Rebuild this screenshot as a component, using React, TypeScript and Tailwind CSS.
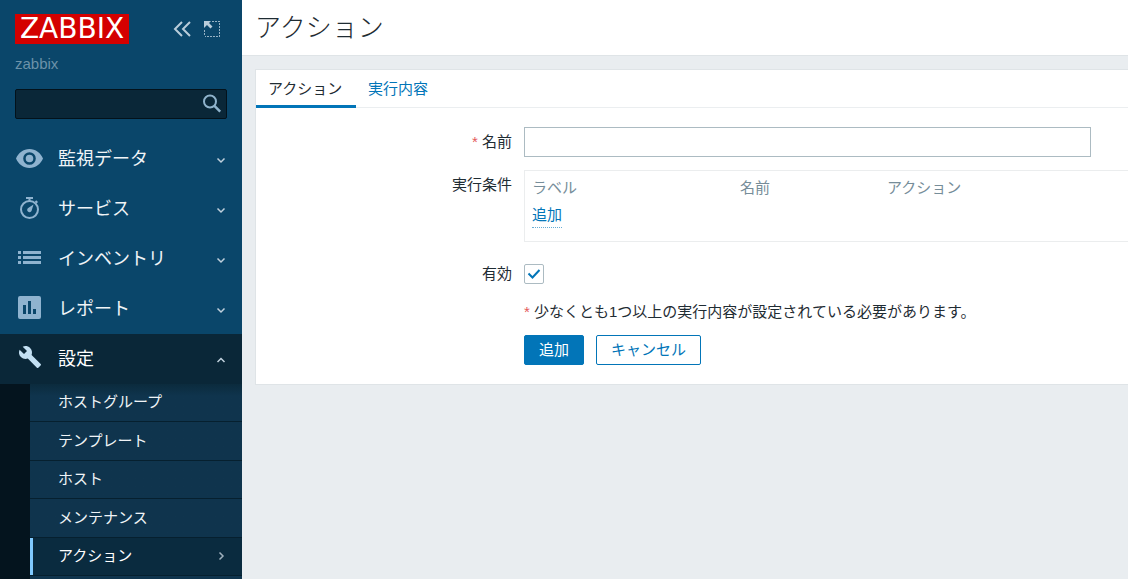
import { useState } from 'react';
import type { ReactNode } from 'react';
import clsx from 'clsx';

interface MenuItem {
  id: string;
  label: string;
  icon: ReactNode;
}

const MENU: MenuItem[] = [
  { id: 'monitoring', label: '監視データ', icon: <EyeIcon /> },
  { id: 'services', label: 'サービス', icon: <StopwatchIcon /> },
  { id: 'inventory', label: 'インベントリ', icon: <ListIcon /> },
  { id: 'reports', label: 'レポート', icon: <ReportIcon /> },
  { id: 'configuration', label: '設定', icon: <WrenchIcon /> },
];

const SUBMENU = ['ホストグループ', 'テンプレート', 'ホスト', 'メンテナンス', 'アクション'];

function EyeIcon() {
  return (
    <svg width="28" height="28" viewBox="0 0 28 28" fill="currentColor" fillRule="evenodd">
      <path d="M14.5 4C8.3 4 3.3 7.9 1 13.5 3.3 19.1 8.3 23 14.5 23S25.7 19.1 28 13.5C25.7 7.9 20.7 4 14.5 4zM14.5 19.8a6.3 6.3 0 1 1 0-12.6 6.3 6.3 0 0 1 0 12.6zM14.5 9.7a3.8 3.8 0 1 0 0 7.600 3.8 3.8 0 0 0 0-7.6z" />
    </svg>
  );
}

function StopwatchIcon() {
  return (
    <svg width="28" height="28" viewBox="0 0 28 28" fill="none" stroke="currentColor">
      <circle cx="14.5" cy="14.5" r="8.5" strokeWidth="2" />
      <path d="M11 3h7M14.5 3v3" strokeWidth="2" />
      <path d="M20.5 6l1.8 1.8" strokeWidth="2" />
      <path d="M18.5 9.5l-2 6.5a2.3 2.3 0 1 1-3.3-3z" fill="currentColor" stroke="none" />
    </svg>
  );
}

function ListIcon() {
  return (
    <svg width="28" height="28" viewBox="0 0 28 28" fill="currentColor">
      <path d="M3 6h3v3H3zM8 6h18v3H8zM3 11h3v3H3zM8 11h18v3H8zM3 16h3v3H3zM8 16h18v3H8z" />
    </svg>
  );
}

function ReportIcon() {
  return (
    <svg width="28" height="28" viewBox="0 0 28 28" fill="currentColor" fillRule="evenodd">
      <path d="M5 1h19a2 2 0 0 1 2 2v19a2 2 0 0 1-2 2H5a2 2 0 0 1-2-2V3a2 2 0 0 1 2-2zM8 10v9h3v-9zM13 6v13h3V6zM18 14v5h3v-5z" />
    </svg>
  );
}

function WrenchIcon() {
  return (
    <svg width="28" height="28" viewBox="-3 0 28 28" fill="currentColor">
      <path d="M22.7 19l-9.1-9.1c.9-2.3.4-5-1.5-6.9-2-2-5-2.4-7.4-1.3L9 6 6 9 1.6 4.7C.4 7.1.9 10.1 2.9 12.1c1.9 1.9 4.6 2.4 6.9 1.5l9.1 9.1c.4.4 1 .4 1.4 0l2.3-2.3c.5-.4.5-1.1.1-1.4z" />
    </svg>
  );
}

function SearchIcon() {
  return (
    <svg width="20" height="20" viewBox="0 0 20 20" fill="none" stroke="currentColor">
      <circle cx="8" cy="7.5" r="6" strokeWidth="2" />
      <path d="M12.2 11.7l6 6" strokeWidth="2.5" />
    </svg>
  );
}

function Chevron({ className, d }: { className?: string; d: string }) {
  return (
    <svg className={className} width="10" height="10" viewBox="0 0 10 10" fill="none" stroke="currentColor" strokeWidth="1.5">
      <path d={d} />
    </svg>
  );
}

function Sidebar() {
  const [expanded, setExpanded] = useState('configuration');

  return (
    <aside className="flex h-screen w-[242px] shrink-0 flex-col overflow-hidden bg-[#0a466a] text-[#f0f4f7]">
      <div className="flex items-start justify-between pt-3.5 pr-5 pl-[15px]">
        <a
          href="#"
          className="flex h-[30px] w-[114px] items-center justify-center bg-[#d40000] font-['DejaVu_Sans',sans-serif] text-[28px] leading-none text-white"
        >
          ZABBIX
        </a>
        <div className="flex items-center gap-3 pt-1.5 text-[#b9cddb]">
          <button type="button" aria-label="サイドバーを隠す">
            <svg width="20" height="18" viewBox="0 0 20 18" fill="none" stroke="currentColor" strokeWidth="2">
              <path d="M10 2L3 9l7 7M18 2l-7 7 7 7" />
            </svg>
          </button>
          <button type="button" aria-label="サイドバーを縮小">
            <svg width="18" height="18" viewBox="1 0 18 18" fill="none" stroke="currentColor">
              <path d="M9 1.5h8M16.5 3v14M15 16.5H2M1.5 10v6" strokeDasharray="2 1" strokeOpacity="0.8" />
              <path d="M1 1h7L6 3l3.500 3.500-2 2L4 5 2 7 1 8z" fill="currentColor" stroke="none" />
            </svg>
          </button>
        </div>
      </div>

      <p className="mt-2.5 px-[15px] text-[15px] leading-5 text-[#6c92a9]">zabbix</p>

      <form className="mx-[15px] mt-[15px] flex h-[30px] shrink-0 items-center rounded-xs border border-[#03121b] bg-[#0a2738] pr-1" role="search">
        <input aria-label="検索" className="h-full min-w-0 flex-1 bg-transparent px-2 outline-none" />
        <button type="button" aria-label="検索する" className="text-[#8fb3cc]">
          <SearchIcon />
        </button>
      </form>

      <nav className="mt-[15px] flex flex-1 flex-col">
        {MENU.map((item) => {
          const isOpen = expanded === item.id;
          return (
            <button
              key={item.id}
              type="button"
              aria-expanded={isOpen}
              onClick={() => setExpanded(item.id)}
              className={clsx(
                'flex h-[50px] w-full shrink-0 items-center pr-4 pl-[15px] text-left text-lg',
                isOpen && 'bg-[#0a2738] text-white'
              )}
            >
              <span className={isOpen ? 'text-[#c3e0f3]' : 'text-[#8fb3cf]'}>{item.icon}</span>
              <span className="flex-1 pl-[15px]">{item.label}</span>
              <Chevron className="mt-0.5 text-[#c0d0dc]" d={isOpen ? 'M1.5 7L5 3.5 8.5 7' : 'M1.5 3.5L5 7l3.5-3.5'} />
            </button>
          );
        })}

        <div className="flex-1 bg-[#04141e] pl-[30px]">
          <div className="h-full bg-[#0f344d] bg-linear-to-b from-[#0b2b3d] to-[#0f344d] to-[12px]">
            <ul className="grid h-48 auto-rows-fr text-[15px]">
              {SUBMENU.map((label) => {
                const isActive = label === 'アクション';
                return (
                  <li key={label} className="border-b border-[#06202f]">
                    <a
                      href="#"
                      aria-current={isActive ? 'page' : undefined}
                      className={clsx(
                        'flex h-full items-center justify-between border-l-3 pr-4 pl-[25px]',
                        isActive ? 'border-[#80caff] bg-[#0a2b3f] text-white' : 'border-transparent'
                      )}
                    >
                      {label}
                      {isActive && <Chevron className="text-[#9fb0bd]" d="M3.5 1.5L7 5 3.5 8.5" />}
                    </a>
                  </li>
                );
              })}
            </ul>
          </div>
        </div>
      </nav>
    </aside>
  );
}

function ActionForm() {
  const [name, setName] = useState('');
  const [enabled, setEnabled] = useState(true);

  return (
    <form className="grid grid-cols-[256px_1fr] gap-x-3 pt-[19px] pb-[19px] leading-[30px]">
      <label htmlFor="name" className="text-right">
        <span className="text-[#e45959]">*</span> 名前
      </label>
      <div className="pr-9">
        <input
          id="name"
          value={name}
          onChange={(e) => setName(e.target.value)}
          className="block h-[30px] w-full max-w-[567px] border border-[#acbbc2] px-1.5 outline-none"
        />
      </div>

      <div className="mt-[13px] text-right">実行条件</div>
      <div className="mt-[13px] h-[72px] border border-r-0 border-[#ebedee] px-[7px] pt-0.5">
        <table className="w-full table-fixed text-left">
          <thead>
            <tr className="text-[#768d99]">
              <th className="w-[208px] font-normal">ラベル</th>
              <th className="w-[147px] font-normal">名前</th>
              <th className="font-normal">アクション</th>
            </tr>
          </thead>
          <tbody>
            <tr>
              <td colSpan={3}>
                <button type="button" className="block border-b border-dotted border-[#0275b8]/60 leading-6 text-[#0275b8]">
                  追加
                </button>
              </td>
            </tr>
          </tbody>
        </table>
      </div>

      <label htmlFor="enabled" className="mt-[17px] text-right">
        有効
      </label>
      <div className="mt-[17px] flex items-center">
        <span className="grid size-5">
          <input
            id="enabled"
            type="checkbox"
            checked={enabled}
            onChange={(e) => setEnabled(e.target.checked)}
            className="col-start-1 row-start-1 size-5 appearance-none rounded-xs border border-[#acbbc2] bg-white"
          />
          {enabled && (
            <svg
              className="pointer-events-none col-start-1 row-start-1 text-[#0275b8]"
              width="20"
              height="20"
              viewBox="0 0 20 20"
              fill="none"
              stroke="currentColor"
              strokeWidth="2"
            >
              <path d="M4.5 9.5l4 4 7-7.5" />
            </svg>
          )}
        </span>
      </div>

      <p className="col-start-2 mt-2">
        <span className="text-[#e45959]">*</span> 少なくとも1つ以上の実行内容が設定されている必要があります。
      </p>

      <div className="col-start-2 mt-2 flex gap-3 leading-7">
        <button type="submit" className="rounded-xs border border-[#0275b8] bg-[#0275b8] px-3.5 text-white">
          追加
        </button>
        <button type="button" className="rounded-xs border border-[#0275b8] bg-white px-3.5 text-[#0275b8]">
          キャンセル
        </button>
      </div>
    </form>
  );
}

export default function App() {
  return (
    <div className="flex min-h-screen bg-[#e9edf0] font-['Liberation_Sans','Noto_Sans_CJK_JP',sans-serif] text-[15px] text-[#1f2c33]">
      <Sidebar />
      <main className="min-w-0 flex-1">
        <header className="flex h-14 items-center border-b border-[#dfe4e7] bg-white px-[13px]">
          <h1 className="text-[26px] leading-none font-light">アクション</h1>
        </header>

        <section className="mt-[13px] ml-[13px] border border-r-0 border-[#dfe4e7] bg-white">
          <div role="tablist" className="flex h-[38px] border-b border-[#ebeef0]">
            <button
              type="button"
              role="tab"
              aria-selected="true"
              className="-mb-px w-[100px] border-b-3 border-[#0275b8] px-3 pt-1 text-left whitespace-nowrap"
            >
              アクション
            </button>
            <button
              type="button"
              role="tab"
              aria-selected="false"
              className="-mb-px border-b-3 border-transparent px-3 pt-1 text-[#0275b8]"
            >
              実行内容
            </button>
          </div>
          <ActionForm />
        </section>
      </main>
    </div>
  );
}
